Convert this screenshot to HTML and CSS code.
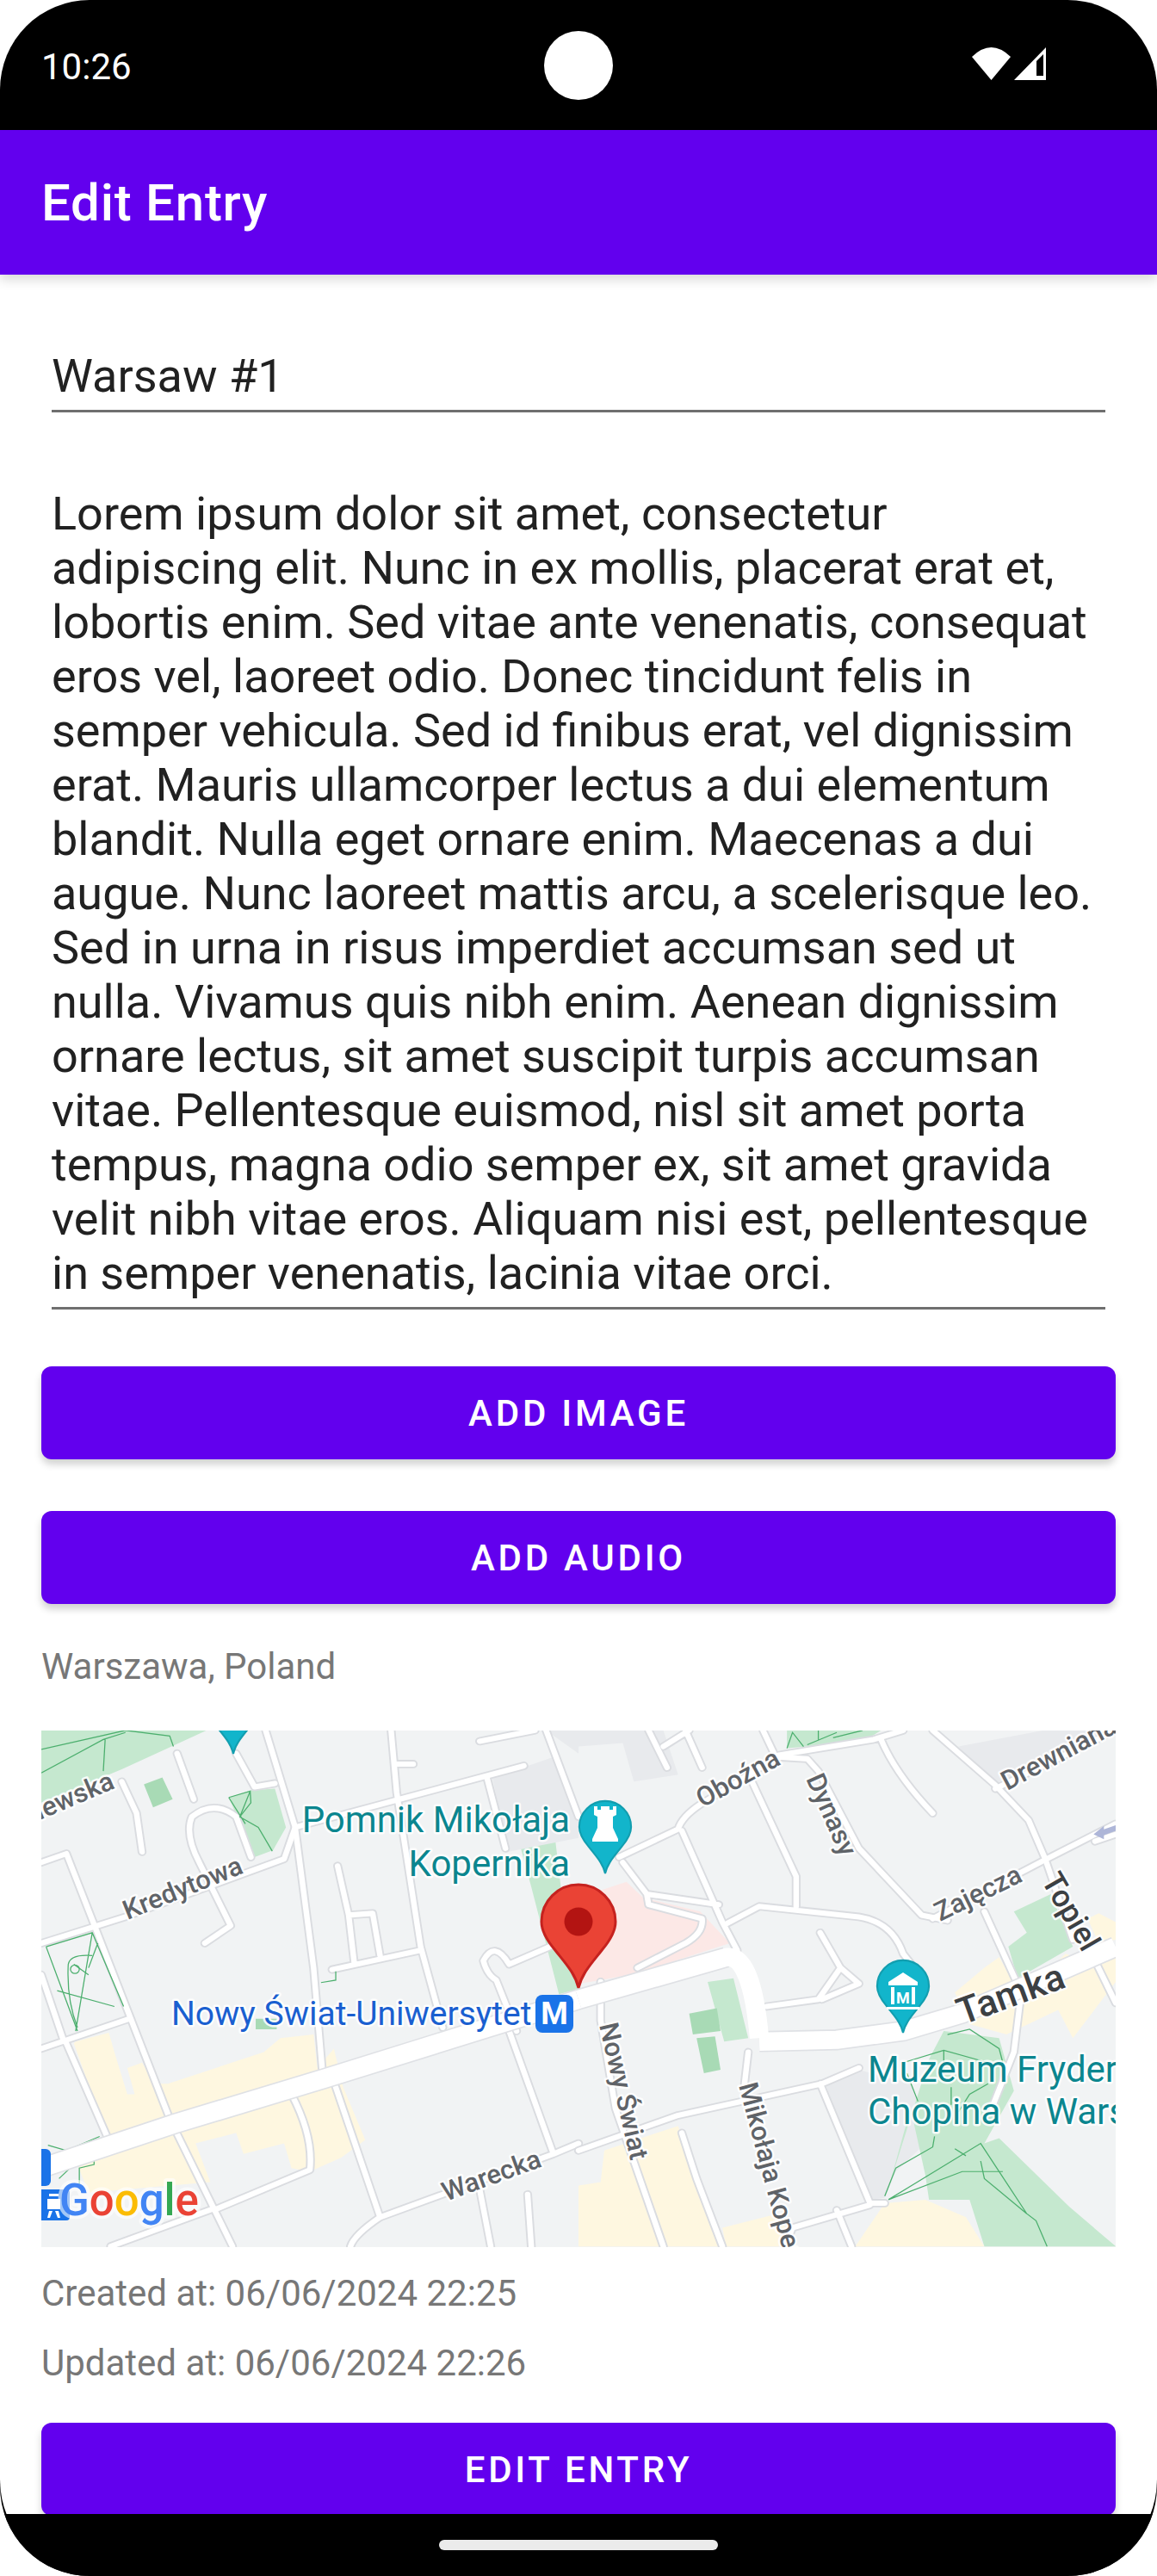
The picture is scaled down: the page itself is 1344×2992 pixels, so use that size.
FILE: index.html
```html
<!DOCTYPE html>
<html>
  <head>
    <title>Edit Entry</title>
    <link rel="stylesheet" href="styles.css">
  </head>
  <body>
    <div class="phone">
      <div class="status-bar">
        <span class="clock">10:26</span>
        <div class="camera"></div>
        <div class="status-icons">
          <svg class="wifi" width="45" height="38" viewBox="0 0 45 38"><path d="M22.5 38 0 11Q22.5-11 45 11Z"/></svg>
          <svg class="signal" width="37" height="38" viewBox="0 0 37 38"><path fill-rule="evenodd" d="M0 38 37 0V38ZM26 16V33H34V8Z"/></svg>
        </div>
      </div>
      <header class="app-bar">Edit Entry</header>
      <main class="content">
        <div class="field title-field">Warsaw #1</div>
        <div class="field body-field">Lorem ipsum dolor sit amet, consectetur adipiscing elit. Nunc in ex mollis, placerat erat et, lobortis enim. Sed vitae ante venenatis, consequat eros vel, laoreet odio. Donec tincidunt felis in semper vehicula. Sed id finibus erat, vel dignissim erat. Mauris ullamcorper lectus a dui elementum blandit. Nulla eget ornare enim. Maecenas a dui augue. Nunc laoreet mattis arcu, a scelerisque leo. Sed in urna in risus imperdiet accumsan sed ut nulla. Vivamus quis nibh enim. Aenean dignissim ornare lectus, sit amet suscipit turpis accumsan vitae. Pellentesque euismod, nisl sit amet porta tempus, magna odio semper ex, sit amet gravida velit nibh vitae eros. Aliquam nisi est, pellentesque in semper venenatis, lacinia vitae orci.</div>
        <button class="btn add-image">Add Image</button>
        <button class="btn add-audio">Add Audio</button>
        <p class="info address">Warszawa, Poland</p>

        <svg class="map" width="1248" height="600" viewBox="0 0 1248 600">
          <defs>
            <path id="pin" d="M0 77C-4 60-14 50-28 32-38 20-43 10-43 0A43 43 0 1 1 43 0C43 10 38 20 28 32 14 50 4 60 0 77Z"/>
            <g id="roads-left">
              <path d="M330 170 370 260 385 370M480 90 525 220M680 385 640 270Q580 220 520 270 500 320 540 400L625 580 555 630"/>
              <path d="M720 24 800 300 850 700 875 1010M640 90 690 185 745 175M112 400 180 375 260 590 460 1130 630 1493"/>
              <path d="M112 630 340 555 770 390 800 300 1420 125M1060 24 1075 200 1140 640 1200 870M1070 120H1120"/>
              <path d="M915 410 945 550 1010 545 1030 665M945 550 960 685M900 705 1140 650"/>
              <path d="M112 930 350 845M180 915 290 1180M112 720 170 900M590 1385 840 1275Q850 1180 790 1060M580 1385 300 1493"/>
              <path d="M910 1040 1030 1410 1200 1345 1500 1230 1568 1200M1380 880 1500 1230M1490 640 1380 690Q1340 620 1310 680 1320 720 1345 735L1400 880"/>
              <path d="M1330 1493 1300 1330M1430 1345 1440 1493M1030 1410Q960 1460 950 1493M1320 160 1370 360M1480 24 1568 270M1300 55 1450 24"/>
            </g>
            <g id="roads-right">
              <path d="M110 385 270 305Q280 270 330 235L540 100 620 105 650 140 760 360 930 550 1000 565"/>
              <path d="M960 560 1260 395 1456 290M120 400 185 490 190 520 335 560Q340 600 290 630L160 700M185 490 380 520M280 310 390 570 430 650"/>
              <path d="M400 575 490 525 760 555Q850 570 880 660L910 700M470 170 590 440V525M500 24 530 90M190 24 240 130M230 70 300 24M290 24 335 130"/>
              <path d="M540 95 800 50 880 24M820 50Q860 150 960 260M960 24 1130 180 1220 280 1265 390 1340 620M1130 190 1456 24M1100 540 1200 770 1180 940 1120 1100"/>
              <path d="M655 600 710 700 650 790 510 810M710 700 760 745 660 790M0 1220 270 1120 660 1030 760 985M655 1030 790 1370H830M790 1375 580 1440 560 1493"/>
              <path d="M460 940 450 1030M60 740V850L100 1100 230 1493M280 1170 320 1300 390 1493M700 1390 740 1493M1400 680 1456 800M1400 340 1456 320"/>
            </g>
          </defs>

          <rect class="land" width="1248" height="600"/>

          <g transform="matrix(.4286 0 0 .408 -48 -10)">
            <path class="park" d="M112 24H560L330 135 112 230ZM620 215 678 195 745 190 775 300 740 365 690 385ZM1411 358 1505 336 1520 470 1568 760 1515 775 1440 470Z"/>
            <path class="park-dark" d="M390 178 440 158 468 220 415 243ZM693 845H750V875H693Z"/>
            <path class="building" d="M1335 160 1500 100 1568 280V330L1375 370ZM1480 24H1568V90Z"/>
            <path class="shop" d="M205 910 295 885 310 940 345 1060H365L345 985 385 970 420 1030 455 1030 715 940 760 900 850 890 860 985 905 930 930 1040 990 1190 925 1240 840 1280 790 1270 770 1200 660 1230 640 1170 530 1200 570 1310 240 1340 210 1260 470 1150 290 1180 200 915Z"/>
            <use href="#roads-left" class="road-casing"/>
            <use href="#roads-left" class="road"/>
            <path class="trail" d="M112 78 340 24M112 145 280 50 340 30M340 24 460 40 470 70M285 50 280 140M620 215 678 197 650 270 700 300 738 368M620 215 665 290M678 197 680 230 650 270"/>
            <path class="trail" d="M125 640 250 600 335 810M125 640 210 880M250 600 205 880M185 690Q190 660 250 665M185 690Q180 790 210 870M155 765 310 810M200 690 240 720M265 630 240 700M870 742 910 735V710"/>
            <path class="trail" d="M130 1205 180 1220 270 1180M160 1300 190 1270 255 1240V1260L215 1270V1320"/>
            <circle class="trail" cx="203" cy="704" r="12"/>
            <path class="main-casing" d="M112 1270 470 1145 880 1015 1568 790"/>
            <path class="main-road" d="M112 1270 470 1145 880 1015 1568 790"/>
          </g>

          <g transform="matrix(.4286 0 0 .408 624 -10)">
            <path class="pink" d="M0 500 130 455 175 500 330 540 410 630 160 715 60 735 0 745Z"/>
            <path class="building" d="M0 70 120 60 150 170 270 150 230 24H0ZM1030 70 1260 24H1456L1120 180ZM670 1035 760 990 900 1030 960 1180 860 1280 830 1355 790 1360Z"/>
            <path class="park" d="M565 24H820L780 50 620 70 565 75ZM1180 540 1280 490 1340 640 1190 730 1165 640 1215 600ZM350 740 420 730 460 900 395 910ZM990 880 1140 900 1180 1050 1100 1200 1140 1185 1330 1380 1456 1493H1100L1060 1360 950 1360 940 1290 900 1100 850 1290 830 1360 950 960Z"/>
            <path class="park-dark" d="M300 830 375 815 385 880 310 890ZM320 900 370 895 385 990 340 1000Z"/>
            <path class="shop" d="M0 1320 60 1310 70 1220 270 1150 380 1493H0ZM390 1440 540 1400 590 1493H400ZM830 1370 940 1360 1050 1410 1100 1493H750ZM1020 770 1100 700 1140 670 1210 800 1290 690 1320 660 1400 690 1456 670V740L1340 900 1300 820 1160 890 1060 860ZM1380 560 1410 545 1456 570V620L1410 630Z"/>
            <use href="#roads-right" class="road-casing"/>
            <use href="#roads-right" class="road"/>
            <path class="trail" d="M565 75 580 30 610 70M620 65 700 30M650 24V50M690 45 770 24"/>
            <path class="trail" d="M1000 890 1060 875 1140 930 1150 970M880 970 990 935 1110 970M990 935V1000M1010 1040V1090M830 1350 860 1270 960 1210 965 1180M1110 1030 1060 1060 1030 1110M840 1360 1090 1200 1215 1400 1240 1420 1270 1493M840 1360 1040 1280H1150M1090 1250 1100 1300 1215 1400M890 1000 920 1080M1020 1215 1050 1235"/>
            <path class="main-casing" d="M0 790 400 670M490 910 700 905 880 880 1040 830 1456 640"/>
            <path class="main-road" d="M0 790 400 670Q470 660 490 900"/>
            <path class="main-road" d="M490 910 700 905 880 880 1040 830 1456 640"/>
            <path class="arrow" d="M1396 320 1424 296 1424 306 1456 294V310L1424 322V334Z"/>
          </g>

          <use href="#pin" class="pin-teal" transform="translate(223 -30) scale(.74)"/>

          <text class="map-label street" transform="translate(-2 104) rotate(-23)">lewska</text>
          <text class="map-label street" transform="translate(100 220) rotate(-22)">Kredytowa</text>
          <text class="map-label street" transform="translate(470 547) rotate(-20)">Warecka</text>
          <text class="map-label street" transform="translate(768 90) rotate(-29)">Oboźna</text>
          <text class="map-label street" transform="translate(888 56) rotate(66)">Dynasy</text>
          <text class="map-label street" transform="translate(1122 70) rotate(-28)">Drewniana</text>
          <text class="map-label street" transform="translate(1044 222) rotate(-26)">Zajęcza</text>
          <text class="map-label street" transform="translate(648 342) rotate(77)">Nowy Świat</text>
          <text class="map-label street" transform="translate(810 412) rotate(75)">Mikołaja Kopernika</text>
          <text class="map-label street-major" transform="translate(1161 174) rotate(60)">Topiel</text>
          <text class="map-label street-wide" transform="translate(1070 342) rotate(-20)">Tamka</text>

          <text class="map-label poi" x="614" y="118" text-anchor="end">Pomnik Mikołaja</text>
          <text class="map-label poi" x="614" y="169" text-anchor="end">Kopernika</text>
          <text class="map-label poi" x="960" y="408">Muzeum Fryderyka</text>
          <text class="map-label poi" x="960" y="457">Chopina w Warszawie</text>
          <text class="map-label transit" x="151" y="342">Nowy Świat-Uniwersytet</text>

          <rect class="metro" x="574" y="307" width="44" height="44" rx="8"/>
          <text class="metro-m" x="596" y="341" text-anchor="middle">M</text>

          <use href="#pin" class="pin-teal" transform="translate(655 112) scale(.7)"/>
          <path class="pin-glyph" d="M642 88H646V92H650V88H660V92H664V88H668V98L664 100V113L670 126V129H640V126L646 113V100L642 98Z"/>
          <use href="#pin" class="pin-teal" transform="translate(1001 297) scale(.7)"/>
          <path class="pin-glyph" d="M1001 281 1018 292V296H984V292ZM987 298H991V318H987ZM1011 298H1015V318H1011ZM982 321H1020V324H982Z"/>
          <text class="museum-m" x="1001" y="317" text-anchor="middle">M</text>

          <use href="#pin" class="pin-red" transform="translate(624 222)"/>
          <circle class="pin-dot" cx="624" cy="222" r="16.5"/>

          <rect class="metro" x="-10" y="486" width="21" height="43" rx="6"/>
          <rect class="metro" x="-10" y="533" width="43" height="36" rx="4"/>
          <path class="pin-glyph" d="M9 538H20V541H9ZM7 544H22V556H7ZM9 558H13L10 566H7ZM16 558H20L22 566H19Z"/>
          <text class="google" x="21" y="563"><tspan class="g-blue">G</tspan><tspan class="g-red">o</tspan><tspan class="g-yellow">o</tspan><tspan class="g-blue">g</tspan><tspan class="g-green">l</tspan><tspan class="g-red">e</tspan></text>
        </svg>

        <p class="info created">Created at: 06/06/2024 22:25</p>
        <p class="info updated">Updated at: 06/06/2024 22:26</p>
        <button class="btn edit-entry">Edit Entry</button>
      </main>
      <div class="nav-bar"><div class="nav-handle"></div></div>
    </div>
  </body>
</html>
```

FILE: styles.css
```css
html,
body {
  margin: 0;
  background-color: #fff;
}
.phone {
  position: relative;
  display: flex;
  flex-direction: column;
  width: 1344px;
  height: 2992px;
  overflow: hidden;
  background-color: #000;
  border-radius: 104px;
  font-family: Roboto, sans-serif;
}

/* system bars */
.status-bar {
  position: relative;
  display: flex;
  flex: none;
  justify-content: space-between;
  height: 151px;
  padding: 53px 129px 0 48px;
  box-sizing: border-box;
  color: #fff;
}
.clock {
  font-size: 42px;
  line-height: 49px;
}
.camera {
  position: absolute;
  top: 36px;
  left: 632px;
  width: 80px;
  height: 80px;
  background-color: #fff;
  border-radius: 50%;
}
.status-icons {
  display: flex;
  gap: 4px;
  margin-top: 2px;
}
.status-icons svg {
  fill: #fff;
}
.nav-bar {
  position: absolute;
  right: 0;
  bottom: 0;
  left: 0;
  display: flex;
  justify-content: center;
  height: 72px;
  padding-top: 30px;
  box-sizing: border-box;
  background-color: #000;
}
.nav-handle {
  width: 324px;
  height: 12px;
  background-color: #ebebeb;
  border-radius: 6px;
}

/* app bar */
.app-bar {
  position: relative;
  z-index: 1;
  display: flex;
  flex: none;
  align-items: center;
  height: 168px;
  padding-left: 48px;
  background-color: #6200ee;
  color: #fff;
  font-size: 60px;
  font-weight: 500;
  letter-spacing: 0.75px;
  box-shadow: 0 6px 12px rgba(0, 0, 0, 0.15);
}

/* content */
.content {
  flex: 1;
  min-height: 0;
  padding: 0 48px;
  overflow: hidden;
  background-color: #fff;
  border-radius: 0 0 112px 112px;
}
.field {
  margin: 0 12px;
  padding-bottom: 8px;
  color: #212121;
  font-size: 54px;
  line-height: 63px;
  border-bottom: 3px solid #6f6f6f;
}
.title-field {
  margin-top: 86px;
}
.body-field {
  margin-top: 86px;
}
.btn {
  display: block;
  width: 100%;
  height: 108px;
  padding: 0;
  background-color: #6200ee;
  color: #fff;
  border: none;
  border-radius: 12px;
  font-family: Roboto, sans-serif;
  font-size: 42px;
  font-weight: 500;
  letter-spacing: 3.75px;
  text-transform: uppercase;
  box-shadow: 0 6px 9px rgba(0, 0, 0, 0.18);
}
.add-image {
  margin-top: 66px;
}
.add-audio {
  margin-top: 60px;
}
.edit-entry {
  margin-top: 45px;
}
.info {
  margin: 0;
  color: #777;
  font-size: 42px;
  line-height: 49px;
}
.address {
  margin-top: 48px;
}
.created {
  margin-top: 29px;
}
.updated {
  margin-top: 32px;
}

/* map */
.map {
  display: block;
  margin-top: 50px;
  fill: none;
}
.land {
  fill: #f1f3f4;
}
.park {
  fill: #c5e8cf;
}
.park-dark {
  fill: #a8dab5;
}
.building {
  fill: #e8eaed;
}
.shop {
  fill: #fef7e0;
}
.pink {
  fill: #fce8e6;
}
.road-casing {
  stroke: #dadce0;
  stroke-width: 24;
  stroke-linecap: round;
  stroke-linejoin: round;
}
.road {
  stroke: #fff;
  stroke-width: 15;
  stroke-linecap: round;
  stroke-linejoin: round;
}
.main-casing {
  stroke: #dfe1e5;
  stroke-width: 60;
}
.main-road {
  stroke: #fff;
  stroke-width: 52;
  stroke-linejoin: round;
}
.trail {
  stroke: #4caf6e;
  stroke-width: 3;
}
.arrow {
  fill: #aeb6d8;
}
.map-label {
  font-family: Roboto, sans-serif;
  paint-order: stroke;
  stroke: #fff;
  stroke-opacity: 0.85;
  stroke-width: 5px;
  stroke-linejoin: round;
}
.street {
  fill: #5f6368;
  font-size: 31px;
  font-weight: 500;
}
.street-major {
  fill: #3c4043;
  font-size: 36px;
  font-weight: 500;
}
.street-wide {
  fill: #3c4043;
  font-size: 43px;
  font-weight: 500;
}
.poi {
  fill: #0b868f;
  font-size: 42px;
}
.transit {
  fill: #1a5fd0;
  font-size: 39px;
}
.metro {
  fill: #1a73e8;
}
.metro-m {
  fill: #fff;
  font-family: Roboto, sans-serif;
  font-size: 36px;
  font-weight: 700;
}
.museum-m {
  fill: #fff;
  font-family: Roboto, sans-serif;
  font-size: 18px;
  font-weight: 700;
}
.pin-teal {
  fill: #12b5cb;
  stroke: #129eaf;
  stroke-width: 3;
}
.pin-glyph {
  fill: #fff;
}
.pin-red {
  fill: #ea4335;
  stroke: #c5221f;
  stroke-width: 3;
}
.pin-dot {
  fill: #b31412;
}
.google {
  font-family: Roboto, sans-serif;
  font-size: 51px;
  font-weight: 500;
  paint-order: stroke;
  stroke: #fff;
  stroke-opacity: 0.6;
  stroke-width: 8px;
  stroke-linejoin: round;
}
.g-blue {
  fill: #4285f4;
}
.g-red {
  fill: #ea4335;
}
.g-yellow {
  fill: #fbbc05;
}
.g-green {
  fill: #34a853;
}
```
